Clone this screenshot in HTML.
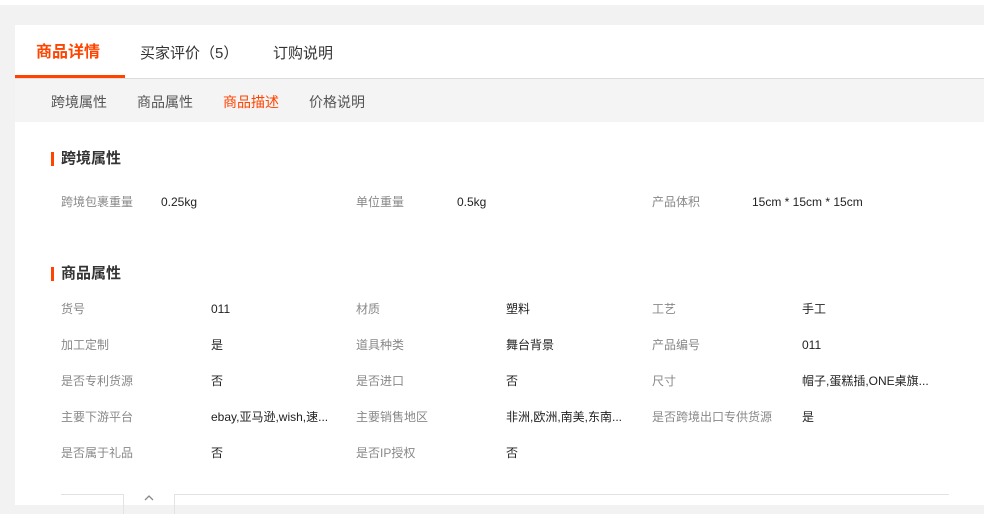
<!DOCTYPE html>
<html><head><meta charset="utf-8"><style>
*{margin:0;padding:0;box-sizing:border-box}
body{width:984px;height:505px;overflow:hidden;background:#f2f2f2;font-family:"Liberation Sans","Noto Sans CJK SC",sans-serif;position:relative}
.a{position:absolute;white-space:nowrap}
.top{position:absolute;left:0;top:0;width:984px;height:5px;background:#fff}
.card{position:absolute;left:15px;top:25px;width:969px;height:480px;background:#fff}
.tabline{position:absolute;left:15px;top:78px;width:969px;height:1px;background:#dcdcdc}
.sub{position:absolute;left:15px;top:79px;width:969px;height:43px;background:#f4f4f4}
.ul{position:absolute;left:15px;top:75px;width:110px;height:3px;background:#ff4400}
.t{font-size:15px;color:#333;line-height:20px}
.s{font-size:14px;color:#555;line-height:20px}
.h{font-size:15px;font-weight:bold;color:#333;line-height:20px}
.bar{position:absolute;width:3px;height:14px;background:#ff4400}
.l{font-size:12px;color:#888;line-height:16px}
.v{font-size:12px;color:#222;line-height:16px}
</style></head><body>
<div class="top"></div>
<div class="card"></div>
<div class="tabline"></div>
<div class="ul"></div>
<div class="sub"></div>
<div class="a t" style="left:36px;top:43px;color:#ff4400;font-size:16px;font-weight:bold">商品详情</div>
<div class="a t" style="left:140px;top:44px">买家评价（5）</div>
<div class="a t" style="left:273px;top:44px">订购说明</div>
<div class="a s" style="left:51px;top:92px">跨境属性</div>
<div class="a s" style="left:137px;top:92px">商品属性</div>
<div class="a s" style="left:223px;top:92px;color:#ff4400">商品描述</div>
<div class="a s" style="left:309px;top:92px">价格说明</div>

<div class="bar" style="left:51px;top:152px"></div>
<div class="a h" style="left:61px;top:149px">跨境属性</div>
<div class="a l" style="left:61px;top:194px">跨境包裹重量</div><div class="a v" style="left:161px;top:194px">0.25kg</div>
<div class="a l" style="left:356px;top:194px">单位重量</div><div class="a v" style="left:457px;top:194px">0.5kg</div>
<div class="a l" style="left:652px;top:194px">产品体积</div><div class="a v" style="left:752px;top:194px">15cm * 15cm * 15cm</div>

<div class="bar" style="left:51px;top:267px"></div>
<div class="a h" style="left:61px;top:264px">商品属性</div>

<div class="a l" style="left:61px;top:301px">货号</div><div class="a v" style="left:211px;top:301px">011</div>
<div class="a l" style="left:356px;top:301px">材质</div><div class="a v" style="left:506px;top:301px">塑料</div>
<div class="a l" style="left:652px;top:301px">工艺</div><div class="a v" style="left:802px;top:301px">手工</div>

<div class="a l" style="left:61px;top:337px">加工定制</div><div class="a v" style="left:211px;top:337px">是</div>
<div class="a l" style="left:356px;top:337px">道具种类</div><div class="a v" style="left:506px;top:337px">舞台背景</div>
<div class="a l" style="left:652px;top:337px">产品编号</div><div class="a v" style="left:802px;top:337px">011</div>

<div class="a l" style="left:61px;top:373px">是否专利货源</div><div class="a v" style="left:211px;top:373px">否</div>
<div class="a l" style="left:356px;top:373px">是否进口</div><div class="a v" style="left:506px;top:373px">否</div>
<div class="a l" style="left:652px;top:373px">尺寸</div><div class="a v" style="left:802px;top:373px">帽子,蛋糕插,ONE桌旗...</div>

<div class="a l" style="left:61px;top:409px">主要下游平台</div><div class="a v" style="left:211px;top:409px">ebay,亚马逊,wish,速...</div>
<div class="a l" style="left:356px;top:409px">主要销售地区</div><div class="a v" style="left:506px;top:409px">非洲,欧洲,南美,东南...</div>
<div class="a l" style="left:652px;top:409px">是否跨境出口专供货源</div><div class="a v" style="left:802px;top:409px">是</div>

<div class="a l" style="left:61px;top:445px">是否属于礼品</div><div class="a v" style="left:211px;top:445px">否</div>
<div class="a l" style="left:356px;top:445px">是否IP授权</div><div class="a v" style="left:506px;top:445px">否</div>

<div class="a" style="left:61px;top:494px;width:63px;height:20px;border-top:1px solid #e3e3e3;border-right:1px solid #e3e3e3"></div>
<svg class="a" style="left:143px;top:494px" width="12" height="8"><path d="M2 6 L6 2 L10 6" stroke="#888" stroke-width="1.3" fill="none"/></svg>
<div class="a" style="left:174px;top:494px;width:775px;height:20px;border-top:1px solid #e3e3e3;border-left:1px solid #e3e3e3"></div>
</body></html>
